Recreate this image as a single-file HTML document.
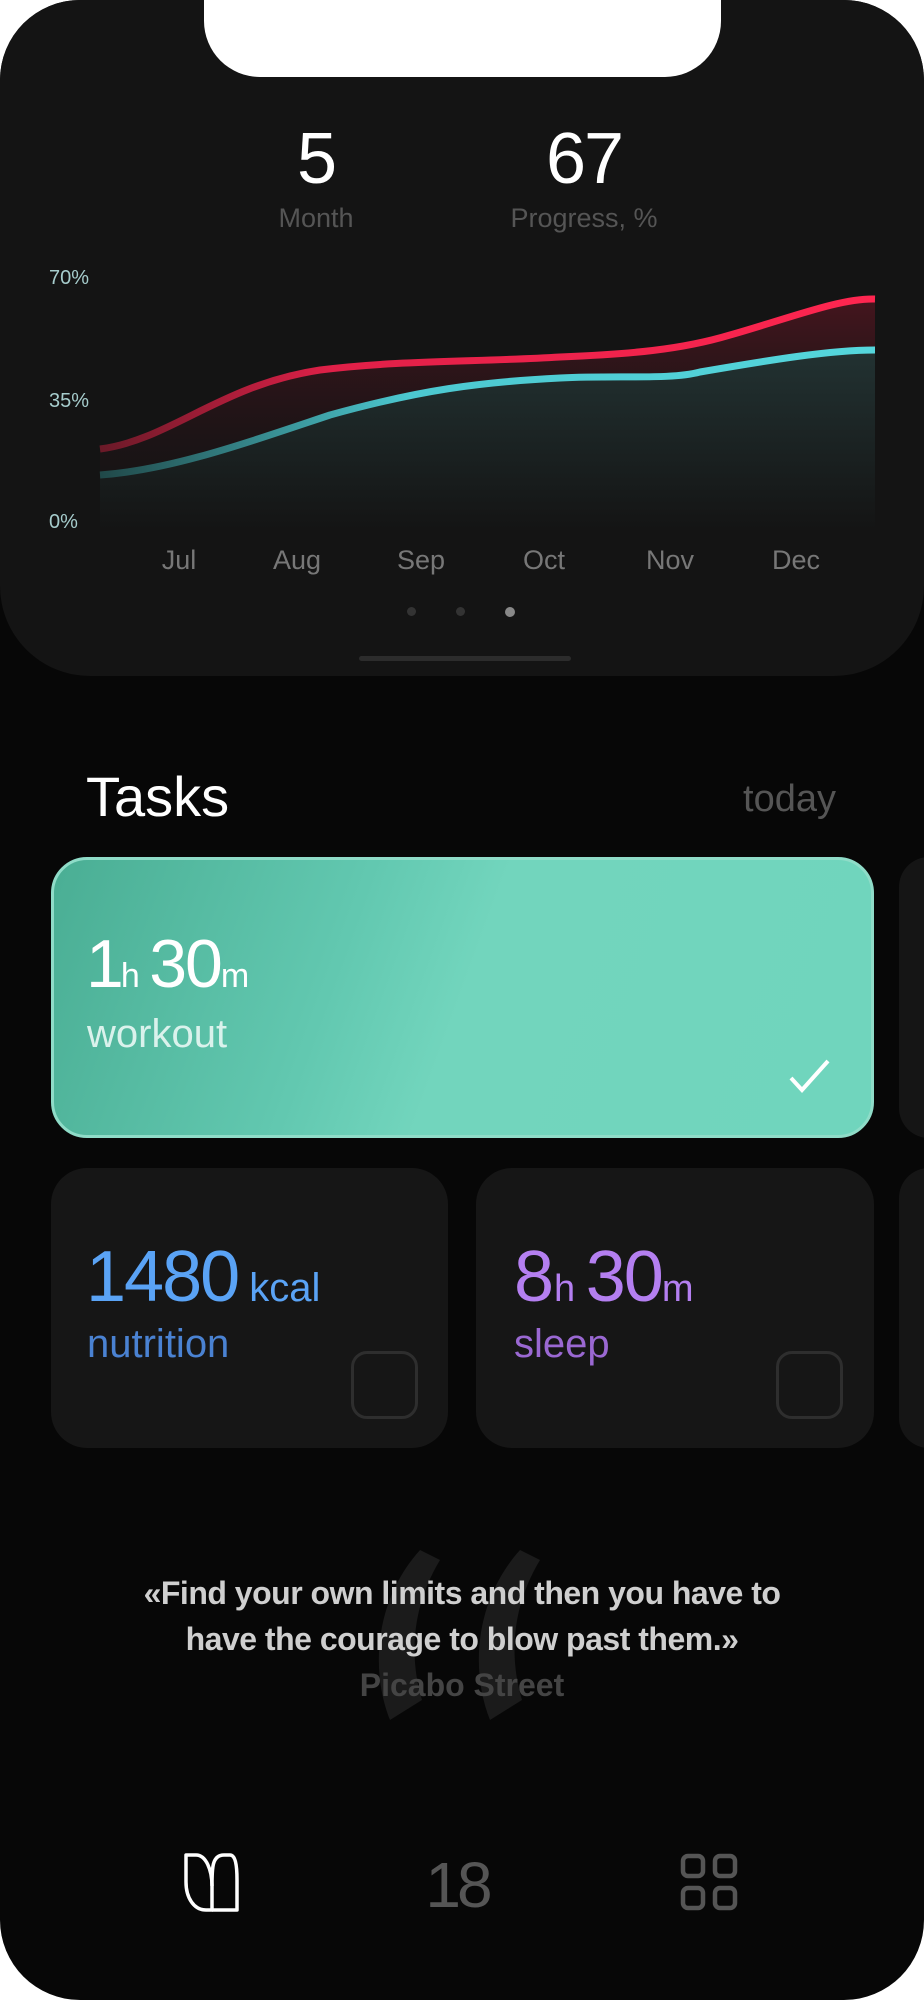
<!DOCTYPE html>
<html><head><meta charset="utf-8"><style>
*{margin:0;padding:0;box-sizing:border-box}
body{width:924px;height:2000px;background:#fff;position:relative;overflow:hidden;font-family:"Liberation Sans",sans-serif}
.phone{position:absolute;left:0;top:0;width:924px;height:2000px;background:#070707;border-radius:80px;overflow:hidden}
.top{position:absolute;left:0;top:0;width:924px;height:676px;background:#141414;border-radius:0 0 90px 90px}
.notch{position:absolute;left:204px;top:-2px;width:517px;height:79px;background:#fff;border-radius:0 0 56px 56px}
.abs{position:absolute}
.c{transform:translateX(-50%);text-align:center;white-space:nowrap}
.card{position:absolute;border-radius:36px}
</style></head><body>
<div class="phone">
<div class="top"></div>
<div class="notch"></div>
<div class="abs c" style="left:316px;top:118px;font-size:72px;color:#fff;letter-spacing:-2px">5</div>
<div class="abs c" style="left:316px;top:203px;font-size:27px;color:#555">Month</div>
<div class="abs c" style="left:584px;top:118px;font-size:72px;color:#fff;letter-spacing:-2px">67</div>
<div class="abs c" style="left:584px;top:203px;font-size:27px;color:#555">Progress, %</div>
<div class="abs" style="left:49px;top:267px;font-size:20px;color:#a6cccc">70%</div>
<div class="abs" style="left:49px;top:390px;font-size:20px;color:#a6cccc">35%</div>
<div class="abs" style="left:49px;top:511px;font-size:20px;color:#a6cccc">0%</div>
<svg class="abs" style="left:0;top:0" width="924" height="560">
<defs>
<linearGradient id="rf" x1="0" y1="0" x2="0" y2="1"><stop offset="0" stop-color="#5a1622" stop-opacity=".7"/><stop offset="1" stop-color="#1a1416" stop-opacity="0"/></linearGradient>
<linearGradient id="cf" x1="0" y1="0" x2="0" y2="1"><stop offset="0" stop-color="#223232"/><stop offset="1" stop-color="#141414"/></linearGradient>
<linearGradient id="rl" x1="0" x2="1"><stop offset="0" stop-color="#6a1a28"/><stop offset=".3" stop-color="#e02048"/><stop offset="1" stop-color="#ff2650"/></linearGradient>
<linearGradient id="cl" x1="0" x2="1"><stop offset="0" stop-color="#204848"/><stop offset=".4" stop-color="#4cc8d0"/><stop offset="1" stop-color="#55d6dc"/></linearGradient>
</defs>
<path d="M100 449 C170 440 220 385 320 370 C400 360 480 362 560 357 C630 354 680 350 730 335 C790 318 840 298 875 299 L875 530 L100 530Z" fill="url(#rf)"/>
<path d="M100 475 C170 470 240 445 330 415 C420 390 480 382 560 378 C620 375 670 380 700 372 C770 360 830 350 875 350 L875 530 L100 530Z" fill="url(#cf)"/>
<path d="M100 449 C170 440 220 385 320 370 C400 360 480 362 560 357 C630 354 680 350 730 335 C790 318 840 298 875 299" fill="none" stroke="url(#rl)" stroke-width="7"/>
<path d="M100 475 C170 470 240 445 330 415 C420 390 480 382 560 378 C620 375 670 380 700 372 C770 360 830 350 875 350" fill="none" stroke="url(#cl)" stroke-width="7"/>
</svg>
<div class="abs c" style="left:179px;top:545px;font-size:27px;color:#777">Jul</div>
<div class="abs c" style="left:297px;top:545px;font-size:27px;color:#777">Aug</div>
<div class="abs c" style="left:421px;top:545px;font-size:27px;color:#777">Sep</div>
<div class="abs c" style="left:544px;top:545px;font-size:27px;color:#777">Oct</div>
<div class="abs c" style="left:670px;top:545px;font-size:27px;color:#777">Nov</div>
<div class="abs c" style="left:796px;top:545px;font-size:27px;color:#777">Dec</div>
<div class="abs" style="left:407px;top:607px;width:9px;height:9px;border-radius:50%;background:#333"></div>
<div class="abs" style="left:456px;top:607px;width:9px;height:9px;border-radius:50%;background:#333"></div>
<div class="abs" style="left:505px;top:607px;width:10px;height:10px;border-radius:50%;background:#888"></div>
<div class="abs" style="left:359px;top:656px;width:212px;height:5px;border-radius:3px;background:#2c2c2c"></div>

<div class="abs" style="left:86px;top:764px;font-size:56px;color:#fff">Tasks</div>
<div class="abs" style="right:88px;top:778px;font-size:38px;color:#555">today</div>

<div class="card" style="left:51px;top:857px;width:823px;height:281px;background:linear-gradient(110deg,#4aae94 0%,#62c8b0 35%,#72d5bd 50%,#70d5bd 100%);border:3px solid #8fdcc8"></div>
<div class="card" style="left:899px;top:857px;width:60px;height:281px;background:#151515"></div>
<div class="abs" style="left:86px;top:925px;color:#fff;white-space:nowrap"><span style="font-size:68px;letter-spacing:-3px">1</span><span style="font-size:34px">h </span><span style="font-size:68px;letter-spacing:-2px">30</span><span style="font-size:34px">m</span></div>
<div class="abs" style="left:87px;top:1012px;font-size:40px;color:#daf2ec">workout</div>
<svg class="abs" style="left:788px;top:1058px" width="44" height="36"><path d="M3 20 L14 32 L40 3" fill="none" stroke="#fff" stroke-width="4"/></svg>

<div class="card" style="left:51px;top:1168px;width:397px;height:280px;background:#161616"></div>
<div class="card" style="left:476px;top:1168px;width:398px;height:280px;background:#161616"></div>
<div class="card" style="left:899px;top:1168px;width:60px;height:280px;background:#151515"></div>
<div class="abs" style="left:86px;top:1236px;color:#5aa3f5;white-space:nowrap"><span style="font-size:72px;letter-spacing:-2px">1480</span><span style="font-size:40px"> kcal</span></div>
<div class="abs" style="left:87px;top:1322px;font-size:40px;color:#4a82d2">nutrition</div>
<div class="abs" style="left:351px;top:1351px;width:67px;height:68px;border:3px solid #2e2e2e;border-radius:16px"></div>
<div class="abs" style="left:514px;top:1236px;color:#b47ff0;white-space:nowrap"><span style="font-size:72px">8</span><span style="font-size:38px">h </span><span style="font-size:72px;letter-spacing:-2px">30</span><span style="font-size:38px">m</span></div>
<div class="abs" style="left:514px;top:1322px;font-size:40px;color:#9a68d2">sleep</div>
<div class="abs" style="left:776px;top:1351px;width:67px;height:68px;border:3px solid #2e2e2e;border-radius:16px"></div>

<svg class="abs" style="left:360px;top:1550px" width="200" height="170"><g fill="#1b1b1b"><path d="M60 0 L80 10 C50 60 50 110 62 150 L30 170 C10 120 15 50 60 0Z"/><path d="M160 0 L180 10 C150 60 150 110 162 150 L130 170 C110 120 115 50 160 0Z"/></g></svg>
<div class="abs c" style="left:462px;top:1570px;font-size:32px;line-height:46px;color:#cfcfcf;font-weight:bold;letter-spacing:-0.5px">«Find your own limits and then you have to<br>have the courage to blow past them.»</div>
<div class="abs c" style="left:462px;top:1667px;font-size:32px;color:#444;font-weight:bold">Picabo Street</div>

<svg class="abs" style="left:182px;top:1852px" width="58" height="62"><g fill="none" stroke="#fff" stroke-width="3.5" stroke-linejoin="round"><path d="M4 3 L14 3 C24 3 30 18 30 34 L30 58 L24 58 C12 58 4 46 4 30Z"/><path d="M30 34 C30 16 30 3 42 3 L48 3 C53 3 55 12 55 28 L55 58 L30 58"/></g></svg>
<div class="abs c" style="left:457px;top:1848px;font-size:64px;color:#555;letter-spacing:-4px">18</div>
<svg class="abs" style="left:680px;top:1853px" width="58" height="58"><g fill="none" stroke="#555" stroke-width="4.5"><rect x="3" y="3" width="20" height="20" rx="5"/><rect x="35" y="3" width="20" height="20" rx="5"/><rect x="3" y="35" width="20" height="20" rx="5"/><rect x="35" y="35" width="20" height="20" rx="5"/></g></svg>
</div>
</body></html>
